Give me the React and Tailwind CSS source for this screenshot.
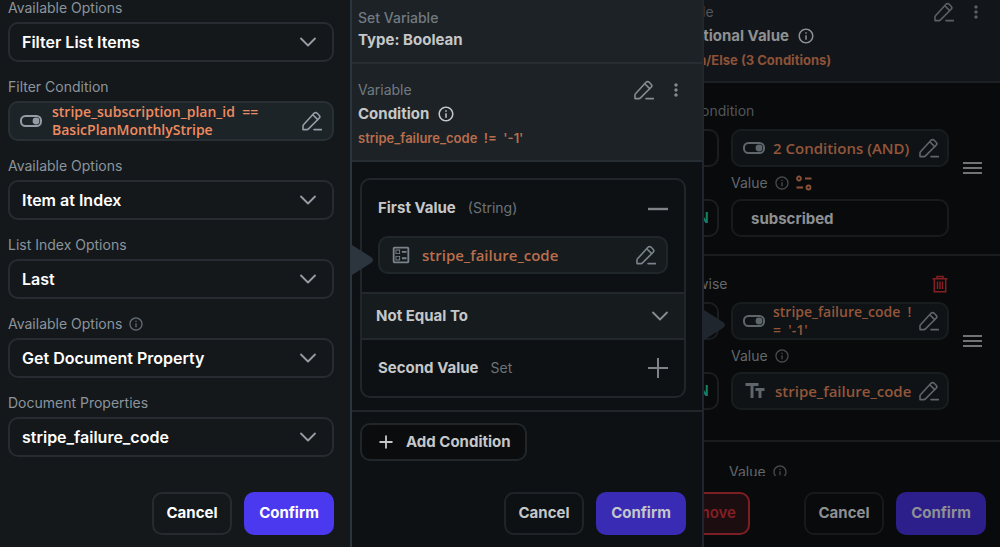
import { ChevronDown, Plus } from 'lucide-react';
import { MdInfoOutline, MdMoreVert, MdOutlineBallot, MdTextFields } from 'react-icons/md';

const PencilIcon = () => (
  <svg className="size-5 shrink-0" viewBox="0 0 20 20" fill="none" stroke="currentColor" strokeWidth="1.6" strokeLinecap="round" strokeLinejoin="round" aria-hidden="true">
    <path d="M1 18.600v-3.600c0-.5.2-.9.5-1.200L12 2.300c.9-.9 2.300-.9 3.200 0l1.900 1.900c.9.9.9 2.200 0 3.100L6.500 17.900c-.4.4-.9.700-1.500.7z" />
    <path d="M10.800 3.700l4.900 4.900" />
    <path d="M12 18.600h7.500" />
  </svg>
);

const ToggleIcon = () => (
  <svg className="h-3 w-[22px] shrink-0" viewBox="0 0 22 12" fill="none" aria-hidden="true">
    <rect x="1" y="1" width="20" height="10" rx="4.500" stroke="currentColor" strokeWidth="2" />
    <circle cx="16" cy="6" r="3.400" fill="currentColor" />
  </svg>
);

const TrashIcon = () => (
  <svg className="h-[18px] w-4" viewBox="0 0 16 18" fill="none" stroke="currentColor" strokeWidth="1.500" aria-hidden="true">
    <path d="M0.500 3.800h15M5 3.500V1.500h6v2M2.300 4v12.800h11.400V4M5.500 6.500v7.500M8 6.500v7.500M10.500 6.500v7.500" />
  </svg>
);

const SlidersIcon = () => (
  <svg className="h-4 w-4" viewBox="0 0 16 16" fill="none" stroke="currentColor" strokeWidth="1.800" aria-hidden="true">
    <circle cx="3" cy="3.500" r="2" />
    <path d="M9 3.500h6.500M0.500 12.500h6.500" />
    <circle cx="12.500" cy="12.500" r="2" />
  </svg>
);

const DragHandleIcon = () => (
  <svg className="h-3.5 w-[19px]" viewBox="0 0 19 14" stroke="currentColor" strokeWidth="2" aria-hidden="true">
    <path d="M0 2h19M0 7h19M0 12h19" />
  </svg>
);

const CollapseIcon = () => (
  <svg className="size-5" viewBox="0 0 20 20" stroke="currentColor" strokeWidth="2.400" aria-hidden="true">
    <path d="M0 11h20" />
  </svg>
);

const ExpandIcon = () => (
  <svg className="size-5" viewBox="0 0 20 20" stroke="currentColor" strokeWidth="2" aria-hidden="true">
    <path d="M0 10h20M10 0v20" />
  </svg>
);

// Pointer from a panel to the row it was opened from
const PanelArrow = ({ className }) => (
  <svg className={`absolute h-8 w-[22px] ${className}`} viewBox="0 0 22 32" fill="currentColor" aria-hidden="true">
    <path d="M0 1l19 12q4 3 0 6L0 31z" />
  </svg>
);

const SelectField = ({ id, label, value, info }) => (
  <div>
    <div className="mb-1.5 flex h-4 items-center gap-1.5 text-[#8b949c]">
      <label htmlFor={id} className="text-sm">{label}</label>
      {info && <MdInfoOutline className="size-4 text-[#626b73]" />}
    </div>
    <div className="relative">
      <select id={id} defaultValue={value} className="h-10 w-full appearance-none rounded-[10px] border-2 border-[#262c31] bg-transparent px-3 text-base font-semibold text-white">
        <option>{value}</option>
      </select>
      <ChevronDown className="pointer-events-none absolute top-1.5 right-3 size-7 text-[#959ca3]" strokeWidth={1.600} />
    </div>
  </div>
);

const FooterButtons = ({ cancelClass, confirmClass }) => (
  <>
    <button type="button" className={`h-[43px] w-20 rounded-[10px] border-2 text-[15px] font-bold ${cancelClass}`}>Cancel</button>
    <button type="button" className={`h-[43px] w-[90px] rounded-[10px] text-[15px] font-bold ${confirmClass}`}>Confirm</button>
  </>
);

const EditButton = () => (
  <button type="button" aria-label="Edit"><PencilIcon /></button>
);

const OptionsPanel = () => (
  <section className="flex w-[35%] shrink-0 flex-col bg-[#14181b]">
    <div className="flex min-h-0 flex-1 flex-col gap-[17px] overflow-hidden pr-4 pl-2">
      <SelectField id="list-options" label="Available Options" value="Filter List Items" />
      <div>
        <p className="mb-1.5 h-4 text-sm/4 text-[#8b949c]">Filter Condition</p>
        <div className="flex h-10 items-center gap-2.5 overflow-hidden rounded-[10px] border-2 border-[#283036] bg-[#1d2428] px-2.5 text-[#949ca5]">
          <ToggleIcon />
          <p className="flex-1 font-['Open_Sans','Noto_Sans',sans-serif] text-sm/[18px] font-semibold whitespace-pre text-[#ee8b60]">
            {'stripe_subscription_plan_id  ==\nBasicPlanMonthlyStripe'}
          </p>
          <EditButton />
        </div>
      </div>
      <SelectField id="filter-options" label="Available Options" value="Item at Index" />
      <SelectField id="index-options" label="List Index Options" value="Last" />
      <SelectField id="item-options" label="Available Options" value="Get Document Property" info />
      <SelectField id="doc-properties" label="Document Properties" value="stripe_failure_code" />
    </div>
    <footer className="flex justify-end gap-3 pt-4 pr-4 pb-3">
      <FooterButtons cancelClass="border-[#262b30] text-white" confirmClass="bg-[#4b39ef] text-white" />
    </footer>
  </section>
);

const ConditionPanel = () => (
  <section className="flex w-[35.2%] shrink-0 flex-col border-l-2 border-[#2b353d] bg-[#0d1114] text-[#c5c7c8]">
    <header className="bg-[#1c2226]">
      <div className="border-b-2 border-[#272e33] px-1.5 pt-2 pb-2.5">
        <p className="text-sm/5 font-medium text-[#727a81]">Set Variable</p>
        <p className="text-[15px]/6 font-bold">Type: Boolean</p>
      </div>
      <div className="border-b-2 border-[#272e33] px-1.5 pt-3.5 pb-2.5">
        <div className="flex items-center text-[#858c91]">
          <p className="flex-1 text-sm/6 text-[#727a81]">Variable</p>
          <EditButton />
          <button type="button" aria-label="More" className="ml-3 pr-2.5"><MdMoreVert className="size-5" /></button>
        </div>
        <h2 className="flex items-center gap-2 text-[15px]/6 font-bold">Condition <MdInfoOutline className="size-[18px]" /></h2>
        <p className="text-[13px]/6 font-semibold whitespace-pre text-[#b96e4d]">{"stripe_failure_code  !=  '-1'"}</p>
      </div>
    </header>

    <div className="mt-4 mr-4 ml-2 rounded-[10px] border-2 border-[#20262a]">
      <div className="px-4 pt-3.5 pb-[18px]">
        <div className="mb-3.5 flex items-center gap-3">
          <h3 className="text-[15px]/7 font-bold">First Value</h3>
          <span className="flex-1 text-sm text-[#6c7378]">(String)</span>
          <button type="button" aria-label="Collapse" className="text-[#7e8387]"><CollapseIcon /></button>
        </div>
        <div className="relative flex h-[38px] items-center gap-2.5 rounded-[10px] border-2 border-[#20272b] bg-[#161b1e] pr-2.5 pl-2.5 text-[#7a828b]">
          <PanelArrow className="top-1.5 -left-7 text-[#2c343d]" />
          <MdOutlineBallot className="size-[22px] shrink-0" />
          <p className="flex-1 font-['Open_Sans','Noto_Sans',sans-serif] text-[15px] font-semibold text-[#b96e4d]">stripe_failure_code</p>
          <EditButton />
        </div>
      </div>
      <div className="relative border-y-2 border-[#22282c] bg-[#161b1e]">
        <select aria-label="Operator" defaultValue="Not Equal To" className="h-11 w-full appearance-none bg-transparent px-3.5 text-[15px] font-bold">
          <option>Not Equal To</option>
        </select>
        <ChevronDown className="pointer-events-none absolute top-2 right-2.5 size-7 text-[#878c90]" strokeWidth={1.600} />
      </div>
      <div className="flex items-center gap-3 px-4 py-3.5">
        <h3 className="text-[15px]/7 font-bold">Second Value</h3>
        <span className="flex-1 text-sm text-[#6c7378]">Set</span>
        <button type="button" aria-label="Set second value" className="text-[#7e8387]"><ExpandIcon /></button>
      </div>
    </div>

    <div className="mt-3 min-h-0 flex-1 border-t-2 border-[#20262a] py-[11px] pl-2">
      <button type="button" className="flex h-[38px] items-center gap-2.5 rounded-[10px] border-2 border-[#20262a] bg-[#0a0c0e] px-3.5 text-[15px] font-bold">
        <Plus className="size-5" strokeWidth={2.200} />
        Add Condition
      </button>
    </div>
    <footer className="flex justify-end gap-3 pt-4 pr-4 pb-3">
      <FooterButtons cancelClass="border-[#1f2428]" confirmClass="bg-[#3a2bb5]" />
    </footer>
  </section>
);

const ValuePill = ({ children }) => (
  <div className="flex h-[38px] items-center gap-2 overflow-hidden rounded-[10px] border-2 border-[#181d20] bg-[#0f1315] pr-2 pl-2.5 text-[#5e656b]">
    {children}
    <EditButton />
  </div>
);

const pillText = "min-w-0 flex-1 font-['Open_Sans','Noto_Sans',sans-serif] font-semibold text-[#93563b]";

const ValueLabel = ({ children, htmlFor }) => (
  <div className="flex h-8 items-center gap-1.5 text-sm text-[#62686c]">
    <label htmlFor={htmlFor}>Value</label>
    <MdInfoOutline className="size-4 text-[#454b50]" />
    {children}
  </div>
);

const BranchRow = ({ children }) => (
  <div className="grid grid-cols-[67px_218px_auto] items-start gap-x-3">
    <div className="flex flex-col gap-8">
      <div className="h-[38px] rounded-[10px] border-2 border-[#1a1e21]" />
      <button type="button" className="h-[38px] rounded-[10px] border-2 border-[#1a1e21] pr-2 text-right text-[15px] font-semibold text-[#178068]">EN</button>
    </div>
    <div>{children}</div>
    <button type="button" aria-label="Reorder" className="mt-8 justify-self-start pl-0.5"><DragHandleIcon /></button>
  </div>
);

const ConditionalValuePanel = () => (
  <section className="relative flex min-w-0 flex-1 justify-end overflow-hidden border-l-2 border-[#20262d] bg-[#090a0b] text-[#8e9092]">
    <PanelArrow className="top-[309px] left-0 text-[#20262d]" />
    <div className="flex w-[348px] shrink-0 flex-col">
      <header className="border-b-2 border-[#1c2024] bg-[#12161a] px-2 pb-[9px]">
        <div className="flex items-center text-[#5a6064]">
          <p className="flex-1 text-sm/6 text-[#50565b]">Variable</p>
          <EditButton />
          <button type="button" aria-label="More" className="ml-3 pr-1.5"><MdMoreVert className="size-5" /></button>
        </div>
        <h2 className="flex items-center gap-2 text-[15px]/6 font-bold">Conditional Value <MdInfoOutline className="size-[18px]" /></h2>
        <p className="text-[13px]/6 font-bold text-[#8c5238]">If/Then/Else (3 Conditions)</p>
      </header>

      <div className="min-h-0 flex-1 overflow-hidden text-[#707477]">
        <div className="border-b-2 border-[#1a1d20] pt-4 pb-[17px]">
          <p className="mb-1.5 pl-[26px] text-sm/6 text-[#50565b]">If Condition</p>
          <BranchRow>
            <ValuePill>
              <ToggleIcon />
              <p className={`${pillText} text-[15px] whitespace-nowrap`}>2 Conditions (AND)</p>
            </ValuePill>
            <ValueLabel htmlFor="branch-value">
              <span className="text-[#8c5238]"><SlidersIcon /></span>
            </ValueLabel>
            <input id="branch-value" defaultValue="subscribed" className="h-[38px] w-full rounded-[10px] border-2 border-[#181b1d] bg-transparent px-[18px] text-[15px] font-bold text-[#8e9092]" />
          </BranchRow>
        </div>
        <div className="border-b-2 border-[#1a1d20] pt-4 pb-[30px]">
          <div className="mb-1.5 flex items-center justify-between pr-[52px] pl-2">
            <p className="text-sm/6 text-[#62686c]">Otherwise</p>
            <button type="button" aria-label="Delete condition" className="text-[#851f24]"><TrashIcon /></button>
          </div>
          <BranchRow>
            <ValuePill>
              <ToggleIcon />
              <p className={`${pillText} text-sm/[18px] whitespace-pre`}>{"stripe_failure_code  !\n=  '-1'"}</p>
            </ValuePill>
            <ValueLabel />
            <ValuePill>
              <MdTextFields className="size-6 shrink-0" />
              <p className={`${pillText} text-[15px]`}>stripe_failure_code</p>
            </ValuePill>
          </BranchRow>
        </div>
        <div className="pt-3.5 pl-[77px]"><ValueLabel /></div>
      </div>

      <footer className="flex justify-end gap-3 pt-4 pr-3.5 pb-3">
        <button type="button" className="mr-auto h-[43px] w-[98px] rounded-[10px] border-2 border-[#7b1f24] bg-[#1c0d10] pr-3 text-right text-[15px] font-semibold text-[#851f24]">Remove</button>
        <FooterButtons cancelClass="border-[#171a1c]" confirmClass="bg-[#2c1f8c]" />
      </footer>
    </div>
  </section>
);

const App = () => (
  <main className="flex h-screen overflow-hidden bg-[#090a0b] font-['Inter','Liberation_Sans',sans-serif]">
    <OptionsPanel />
    <ConditionPanel />
    <ConditionalValuePanel />
  </main>
);

export default App;
